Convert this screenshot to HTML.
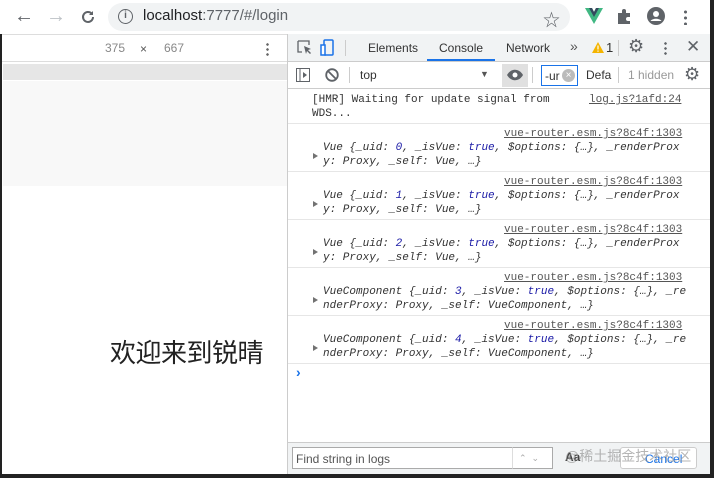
<!DOCTYPE html>
<html><head><meta charset="utf-8"><style>
*{margin:0;padding:0;box-sizing:border-box}
body{width:714px;height:478px;overflow:hidden;background:#fff;position:relative;font-family:"Liberation Sans","Noto Sans CJK SC",sans-serif;color:#333}
.a{position:absolute}
.mono{font-family:"Liberation Mono",monospace;font-size:11px;line-height:14px;color:#333}
.it{font-style:italic}
.k{color:#1a1aa6}
.lnk{color:#555;text-decoration:underline}
.row{position:absolute;left:288px;width:422px;border-bottom:1px solid #e6e6e6}
.tri{position:absolute;left:26px;width:0;height:0;border-left:5px solid #727272;border-top:3.5px solid transparent;border-bottom:3.5px solid transparent}
</style></head><body>
<div class="a" style="left:0;top:0;width:714px;height:34px;background:#fff"></div>
<div class="a" style="left:14px;top:5px;font-size:20px;color:#5f6368">&#8592;</div>
<div class="a" style="left:46px;top:5px;font-size:20px;color:#bdc1c6">&#8594;</div>
<svg class="a" style="left:79px;top:8px" width="18" height="18" viewBox="0 0 18 18"><path d="M14 9a5 5 0 1 1-1.5-3.6" fill="none" stroke="#5f6368" stroke-width="2"/><path d="M14 3v4h-4z" fill="#5f6368"/></svg>
<div class="a" style="left:108px;top:3px;width:462px;height:28px;border-radius:14px;background:#f1f3f4"></div>
<div class="a" style="left:118px;top:9px;width:15px;height:15px;border:1.6px solid #5f6368;border-radius:50%;font-size:10px;font-weight:bold;text-align:center;line-height:12px;color:#5f6368">i</div>
<div class="a" style="left:143px;top:7px;font-size:15px;color:#202124">localhost<span style="color:#5f6368">:7777/#/login</span></div>
<div class="a" style="left:543px;top:6px;font-size:17px;color:#5f6368">&#9734;</div>
<svg class="a" style="left:585px;top:8px" width="18" height="16" viewBox="0 0 18 16"><path d="M0 0h7l2 4 2-4h7L9 16z" fill="#41b883"/><path d="M4 0h3l2 4 2-4h3L9 9z" fill="#35495e"/></svg>
<svg class="a" style="left:616px;top:8px" width="16" height="16" viewBox="0 0 16 16"><path d="M2 5h4V3a2 2 0 0 1 4 0v2h4v4h-2a2 2 0 0 0 0 4h2v3H2z" fill="#5f6368"/></svg>
<svg class="a" style="left:646px;top:6px" width="20" height="20" viewBox="0 0 20 20"><circle cx="10" cy="10" r="9" fill="#5f6368"/><circle cx="10" cy="8" r="3" fill="#fff"/><path d="M4.5 15c2-3 9-3 11 0" fill="#fff"/></svg>
<div class="a" style="left:684px;top:9px;width:3px;height:16px;background:radial-gradient(circle,#5f6368 1.4px,transparent 1.6px) 0 0/3px 6px"></div>

<div class="a" style="left:0;top:34px;width:288px;height:28px;background:#fff;border-top:1px solid #ddd;border-bottom:1px solid #ddd"></div>
<div class="a" style="left:105px;top:41px;font-size:12px;color:#888">375</div>
<div class="a" style="left:140px;top:42px;font-size:12px;color:#555">&#215;</div>
<div class="a" style="left:164px;top:41px;font-size:12px;color:#888">667</div>
<div class="a" style="left:266px;top:42px;width:3px;height:14px;background:radial-gradient(circle,#666 1.2px,transparent 1.4px) 0 0/3px 5px"></div>
<div class="a" style="left:3px;top:64px;width:284px;height:16px;background:#e6e6e6"></div>
<div class="a" style="left:3px;top:81px;width:284px;height:105px;background:#f8f8f8"></div>
<div class="a" style="left:110px;top:333px;font-size:26px;color:#222;font-family:'Noto Sans CJK SC',sans-serif;letter-spacing:-0.5px">欢迎来到锐晴</div>
<div class="a" style="left:0;top:34px;width:2px;height:444px;background:#222"></div>
<div class="a" style="left:287px;top:34px;width:1px;height:440px;background:#ccc"></div>

<div class="a" style="left:288px;top:34px;width:422px;height:28px;background:#f1f3f4;border-bottom:1px solid #ccc"></div>
<svg class="a" style="left:297px;top:40px" width="16" height="16" viewBox="0 0 16 16"><path d="M1 1h11v4M1 1v11h4" fill="none" stroke="#5f6368" stroke-width="1.3"/><path d="M7 6l7 3-3 1 3 3-1 1-3-3-1 3z" fill="#5f6368"/></svg>
<svg class="a" style="left:320px;top:39px" width="16" height="18" viewBox="0 0 16 18"><rect x="4" y="1" width="9" height="15" rx="1" fill="none" stroke="#1a73e8" stroke-width="1.5"/><rect x="1" y="6" width="4" height="10" fill="#fff" stroke="#1a73e8" stroke-width="1.5"/></svg>
<div class="a" style="left:345px;top:40px;width:1px;height:16px;background:#ccc"></div>
<div class="a" style="left:368px;top:41px;font-size:12px;color:#333">Elements</div>
<div class="a" style="left:439px;top:41px;font-size:12px;color:#333">Console</div>
<div class="a" style="left:427px;top:59px;width:68px;height:2px;background:#1a73e8"></div>
<div class="a" style="left:506px;top:41px;font-size:12px;color:#333">Network</div>
<div class="a" style="left:570px;top:38px;font-size:14px;color:#555">&#187;</div>
<svg class="a" style="left:592px;top:42px" width="12" height="11" viewBox="0 0 12 11"><path d="M6 0l6 11H0z" fill="#f4b400"/><path d="M5.4 3.5h1.2v4H5.4zM5.4 8.5h1.2v1.2H5.4z" fill="#fff"/></svg>
<div class="a" style="left:606px;top:40px;font-size:13px;color:#333">1</div>
<div class="a" style="left:618px;top:40px;width:1px;height:16px;background:#ccc"></div>
<div class="a" style="left:628px;top:36px;font-size:18px;color:#5f6368">&#9881;</div>
<div class="a" style="left:664px;top:41px;width:3px;height:14px;background:radial-gradient(circle,#5f6368 1.2px,transparent 1.4px) 0 0/3px 5px"></div>
<div class="a" style="left:686px;top:37px;font-size:17px;color:#5f6368">&#10005;</div>

<div class="a" style="left:288px;top:62px;width:422px;height:27px;background:#fff;border-bottom:1px solid #ccc"></div>
<svg class="a" style="left:296px;top:68px" width="14" height="14" viewBox="0 0 14 14"><rect x="0.5" y="0.5" width="13" height="13" fill="none" stroke="#5f6368"/><path d="M4 1v12" stroke="#5f6368"/><path d="M7 4l4 3-4 3z" fill="#5f6368"/></svg>
<svg class="a" style="left:325px;top:68px" width="14" height="14" viewBox="0 0 14 14"><circle cx="7" cy="7" r="5.8" fill="none" stroke="#5f6368" stroke-width="1.8"/><path d="M3 3l8 8" stroke="#5f6368" stroke-width="1.8"/></svg>
<div class="a" style="left:349px;top:67px;width:1px;height:16px;background:#ccc"></div>
<div class="a" style="left:360px;top:68px;font-size:12px;color:#333">top</div>
<div class="a" style="left:480px;top:69px;font-size:9px;color:#555">&#9660;</div>
<div class="a" style="left:502px;top:64px;width:26px;height:23px;background:#e0e0e0"></div>
<svg class="a" style="left:507px;top:69px" width="16" height="12" viewBox="0 0 16 12"><path d="M0 6c4-7 12-7 16 0-4 7-12 7-16 0z" fill="#5f6368"/><circle cx="8" cy="6" r="2.5" fill="#fff"/></svg>
<div class="a" style="left:532px;top:67px;width:1px;height:16px;background:#ccc"></div>
<div class="a" style="left:541px;top:65px;width:37px;height:21px;border:1px solid #1a73e8;background:#fff;overflow:hidden"><span style="position:absolute;left:3px;top:3px;font-size:12px;color:#333">-ur</span><span style="position:absolute;left:20px;top:3px;width:13px;height:13px;border-radius:50%;background:#bbb;color:#fff;font-size:10px;line-height:13px;text-align:center">&#215;</span></div>
<div class="a" style="left:586px;top:68px;font-size:12px;color:#333">Defa</div>
<div class="a" style="left:618px;top:67px;width:1px;height:16px;background:#ccc"></div>
<div class="a" style="left:628px;top:68px;font-size:12px;color:#999">1 hidden</div>
<div class="a" style="left:684px;top:64px;font-size:18px;color:#5f6368">&#9881;</div>

<div class="row" style="top:89px;height:35px"></div>
<div class="a mono" style="left:312px;top:93px">[HMR] Waiting for update signal from<br>WDS...</div>
<div class="a mono lnk" style="left:589px;top:93px">log.js?1afd:24</div>

<div class="row" style="top:124px;height:48px"></div>
<div class="a mono lnk" style="left:504px;top:127px">vue-router.esm.js?8c4f:1303</div>
<div class="tri" style="left:313px;top:153px"></div>
<div class="a mono it" style="left:323px;top:141px">Vue {_uid: <span class="k">0</span>, _isVue: <span class="k">true</span>, $options: {…}, _renderProx<br>y: Proxy, _self: Vue, …}</div>

<div class="row" style="top:172px;height:48px"></div>
<div class="a mono lnk" style="left:504px;top:175px">vue-router.esm.js?8c4f:1303</div>
<div class="tri" style="left:313px;top:201px"></div>
<div class="a mono it" style="left:323px;top:189px">Vue {_uid: <span class="k">1</span>, _isVue: <span class="k">true</span>, $options: {…}, _renderProx<br>y: Proxy, _self: Vue, …}</div>

<div class="row" style="top:220px;height:48px"></div>
<div class="a mono lnk" style="left:504px;top:223px">vue-router.esm.js?8c4f:1303</div>
<div class="tri" style="left:313px;top:249px"></div>
<div class="a mono it" style="left:323px;top:237px">Vue {_uid: <span class="k">2</span>, _isVue: <span class="k">true</span>, $options: {…}, _renderProx<br>y: Proxy, _self: Vue, …}</div>

<div class="row" style="top:268px;height:48px"></div>
<div class="a mono lnk" style="left:504px;top:271px">vue-router.esm.js?8c4f:1303</div>
<div class="tri" style="left:313px;top:297px"></div>
<div class="a mono it" style="left:323px;top:285px">VueComponent {_uid: <span class="k">3</span>, _isVue: <span class="k">true</span>, $options: {…}, _re<br>nderProxy: Proxy, _self: VueComponent, …}</div>

<div class="row" style="top:316px;height:48px"></div>
<div class="a mono lnk" style="left:504px;top:319px">vue-router.esm.js?8c4f:1303</div>
<div class="tri" style="left:313px;top:345px"></div>
<div class="a mono it" style="left:323px;top:333px">VueComponent {_uid: <span class="k">4</span>, _isVue: <span class="k">true</span>, $options: {…}, _re<br>nderProxy: Proxy, _self: VueComponent, …}</div>

<div class="a" style="left:296px;top:364px;font-size:14px;color:#1a73e8;font-weight:bold">&#8250;</div>

<div class="a" style="left:288px;top:442px;width:422px;height:32px;background:#f1f3f4;border-top:1px solid #ccc"></div>
<div class="a" style="left:292px;top:447px;width:221px;height:22px;border:1px solid #aaa;border-right:none;background:#fff;font-size:12px;color:#555;padding:4px 0 0 3px">Find string in logs</div>
<div class="a" style="left:512px;top:447px;width:41px;height:22px;border:1px solid #aaa;border-left:1px solid #ddd;background:#fff;font-size:9px;color:#aaa;padding:5px 0 0 6px">&#8963;&nbsp; &#8964;</div>
<div class="a" style="left:565px;top:450px;font-size:12px;color:#444;font-weight:bold">Aa</div>
<div class="a" style="left:620px;top:447px;width:77px;height:22px;border:1px solid #ccc;border-radius:3px;background:#fff;font-size:12px;color:#1a73e8;padding:4px 0 0 24px">Cancel</div>
<div class="a" style="left:565px;top:446px;font-size:14px;color:rgba(150,150,150,.7);white-space:nowrap">@稀土掘金技术社区</div>

<div class="a" style="left:710px;top:0;width:4px;height:478px;background:#222"></div>
<div class="a" style="left:0;top:474px;width:714px;height:4px;background:#222"></div>
</body></html>
